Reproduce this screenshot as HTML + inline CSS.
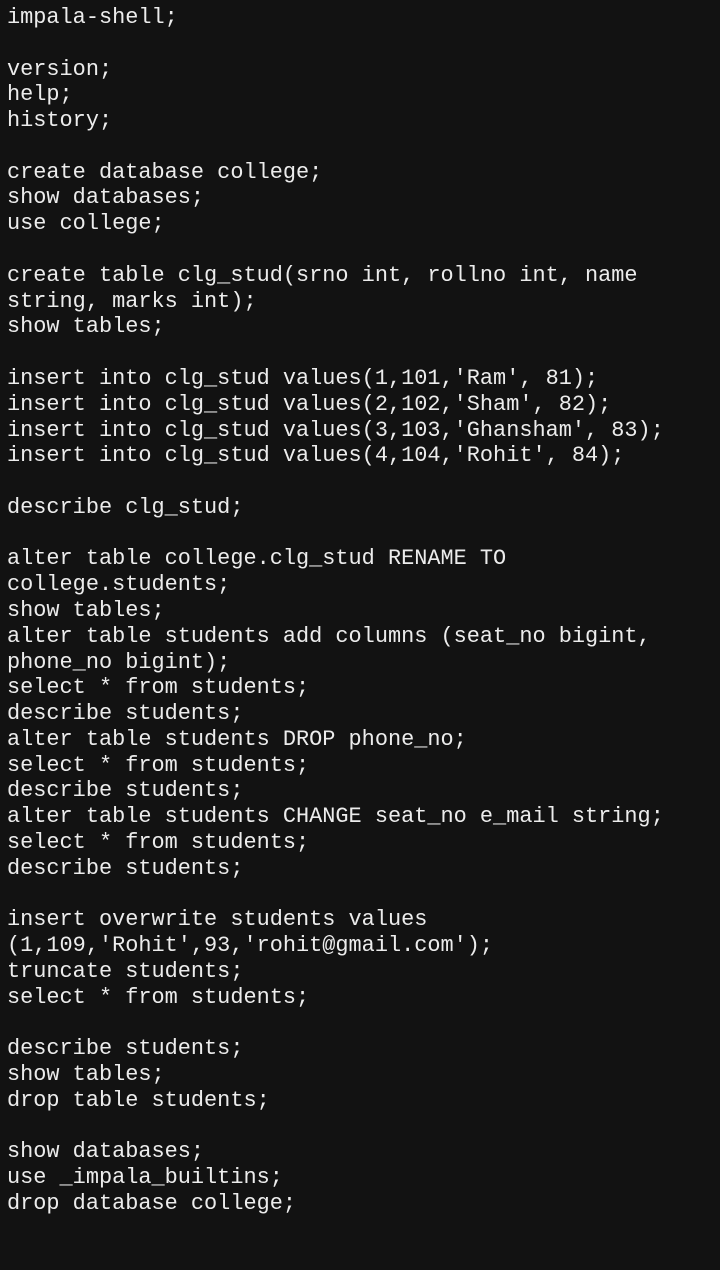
<!DOCTYPE html>
<html><head><meta charset="utf-8"><style>
html,body{margin:0;padding:0;background:#121212;width:720px;height:1270px;overflow:hidden}
pre{margin:0;position:absolute;left:7px;top:5px;font-family:"Liberation Mono","DejaVu Sans Mono",monospace;font-size:21.9px;line-height:25.78px;color:#ececec;white-space:pre}
</style></head><body><pre>impala-shell;

version;
help;
history;

create database college;
show databases;
use college;

create table clg_stud(srno int, rollno int, name
string, marks int);
show tables;

insert into clg_stud values(1,101,'Ram', 81);
insert into clg_stud values(2,102,'Sham', 82);
insert into clg_stud values(3,103,'Ghansham', 83);
insert into clg_stud values(4,104,'Rohit', 84);

describe clg_stud;

alter table college.clg_stud RENAME TO
college.students;
show tables;
alter table students add columns (seat_no bigint,
phone_no bigint);
select * from students;
describe students;
alter table students DROP phone_no;
select * from students;
describe students;
alter table students CHANGE seat_no e_mail string;
select * from students;
describe students;

insert overwrite students values
(1,109,'Rohit',93,'rohit@gmail.com');
truncate students;
select * from students;

describe students;
show tables;
drop table students;

show databases;
use _impala_builtins;
drop database college;</pre></body></html>
